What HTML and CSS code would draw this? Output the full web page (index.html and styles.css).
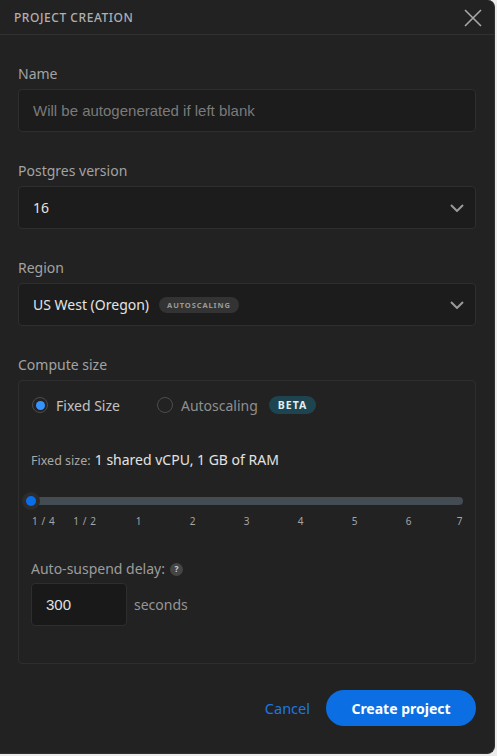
FILE: index.html
```html
<!DOCTYPE html>
<html>
<head>
<meta charset="utf-8">
<link rel="stylesheet" href="styles.css">
</head>
<body>
<div class="dialog">
  <div class="header">
    <span class="title">PROJECT CREATION</span>
    <svg class="close" width="18" height="18" viewBox="0 0 18 18"><path d="M1 1 L17 17 M17 1 L1 17" stroke="#a8a8a8" stroke-width="1.6" fill="none"/></svg>
  </div>
  <div class="body">
    <div class="field">
      <label class="label">Name</label>
      <input class="input text-input" type="text" placeholder="Will be autogenerated if left blank">
    </div>
    <div class="field">
      <label class="label">Postgres version</label>
      <div class="input select">
        <span class="select-value">16</span>
        <svg class="chev" width="14" height="8" viewBox="0 0 14 8"><path d="M1 1 L7 7 L13 1" stroke="#9a9a9a" stroke-width="2" fill="none"/></svg>
      </div>
    </div>
    <div class="field">
      <label class="label">Region</label>
      <div class="input select">
        <span class="select-value">US West (Oregon)</span>
        <span class="tag">AUTOSCALING</span>
        <svg class="chev" width="14" height="8" viewBox="0 0 14 8"><path d="M1 1 L7 7 L13 1" stroke="#9a9a9a" stroke-width="2" fill="none"/></svg>
      </div>
    </div>
    <div class="field">
      <label class="label">Compute size</label>
      <div class="compute">
        <div class="radios">
          <div class="radio-item active"><span class="radio"></span><span class="radio-text">Fixed Size</span></div>
          <div class="radio-item"><span class="radio"></span><span class="radio-text">Autoscaling</span><span class="beta">BETA</span></div>
        </div>
        <div class="fixed-line"><span class="fixed-key">Fixed size:</span> <span class="fixed-val">1 shared vCPU, 1 GB of RAM</span></div>
        <div class="slider">
          <div class="track"></div>
          <div class="thumb"></div>
        </div>
        <div class="ticks">
          <span class="tick first" style="left:0%">1 / 4</span>
          <span class="tick" style="left:12.5%">1 / 2</span>
          <span class="tick" style="left:25%">1</span>
          <span class="tick" style="left:37.5%">2</span>
          <span class="tick" style="left:50%">3</span>
          <span class="tick" style="left:62.5%">4</span>
          <span class="tick" style="left:75%">5</span>
          <span class="tick" style="left:87.5%">6</span>
          <span class="tick last" style="left:100%">7</span>
        </div>
        <div class="suspend-label">Auto-suspend delay: <span class="help">?</span></div>
        <div class="suspend-row">
          <input class="input num-input" type="text" value="300">
          <span class="unit">seconds</span>
        </div>
      </div>
    </div>
    <div class="footer">
      <button class="cancel">Cancel</button>
      <button class="create">Create project</button>
    </div>
  </div>
</div>
</body>
</html>
```
FILE: styles.css
```css
* { box-sizing: border-box; }
html, body { margin: 0; padding: 0; }
body {
  background: #ececec;
  font-family: "Noto Sans", "Open Sans", sans-serif;
  width: 497px;
  height: 756px;
  overflow: hidden;
}
.dialog {
  width: 495px;
  height: 754px;
  background: #222222;
  border: 1px solid #2f2f2f;
  border-top: none;
  border-left: none;
  border-radius: 0 7px 8px 0;
  display: flex;
  flex-direction: column;
}
.header {
  height: 35px;
  border-bottom: 1px solid #313131;
  display: flex;
  align-items: center;
  justify-content: space-between;
  padding: 0 12px 0 14px;
}
.title {
  font-size: 12px;
  letter-spacing: 0.55px;
  color: #b0b0b0;
  font-weight: 500;
}
.close { margin-top: 1px; }
.body {
  padding: 0 18px 0 18px;
  display: flex;
  flex-direction: column;
}
.field { margin-top: 29px; }
.label {
  display: block;
  font-size: 14px;
  line-height: 20px;
  color: #a3a3a3;
  margin-bottom: 5px;
}
.input {
  display: block;
  width: 100%;
  height: 43px;
  background: #1c1c1c;
  border: 1px solid #2e2e2e;
  border-radius: 4px;
  outline: none;
}
.text-input {
  padding: 0 14px;
  font-family: "Liberation Sans", Arial, sans-serif;
  font-size: 15px;
  color: #ddd;
}
.text-input::placeholder { color: #7a7a7a; }
.select {
  display: flex;
  align-items: center;
  padding: 0 11px 0 14px;
}
.select-value {
  font-size: 14px;
  color: #e4e4e4;
}
.select-value:first-child:last-of-type { }
.tag {
  margin-left: 10px;
  height: 16px;
  padding: 0 8px;
  border-radius: 8px;
  background: #333333;
  color: #9a9a9a;
  font-size: 7.5px;
  font-weight: 700;
  letter-spacing: 0.9px;
  display: flex;
  align-items: center;
}
.chev { margin-left: auto; }
.compute {
  border: 1px solid #2e2e2e;
  border-radius: 4px;
  padding: 14px 12px 37px 12px;
  display: flex;
  flex-direction: column;
}
.radios {
  display: flex;
  align-items: center;
  height: 20px;
}
.radio-item {
  display: flex;
  align-items: center;
}
.radio-item + .radio-item { margin-left: 36px; }
.radio {
  width: 16px;
  height: 16px;
  border-radius: 50%;
  border: 1.5px solid #4d4d4d;
  margin-left: 1px;
  display: flex;
  align-items: center;
  justify-content: center;
}
.active .radio::after {
  content: "";
  width: 9px;
  height: 9px;
  border-radius: 50%;
  background: #3394ff;
}
.radio-text {
  margin-left: 8px;
  font-size: 14px;
  color: #8f8f8f;
}
.active .radio-text { color: #c2c2c2; }
.beta {
  margin-left: 11px;
  height: 18px;
  padding: 0 9px;
  border-radius: 9px;
  background: #1e4450;
  color: #e4eef0;
  font-size: 10.5px;
  font-weight: 700;
  letter-spacing: 1px;
  display: flex;
  align-items: center;
}
.fixed-line {
  margin-top: 34px;
  height: 20px;
  line-height: 20px;
  white-space: nowrap;
}
.fixed-key {
  font-size: 12.5px;
  color: #a8a8a8;
}
.fixed-val {
  font-size: 14px;
  color: #e2e2e2;
}
.slider {
  margin-top: 23px;
  height: 18px;
  position: relative;
}
.track {
  position: absolute;
  left: 0;
  right: 0;
  top: 5px;
  height: 8px;
  border-radius: 4px;
  background: #434b53;
}
.thumb {
  position: absolute;
  left: -9px;
  top: 0;
  width: 18px;
  height: 18px;
  border-radius: 50%;
  background: #2c2c2c;
  display: flex;
  align-items: center;
  justify-content: center;
}
.thumb::after {
  content: "";
  width: 10px;
  height: 10px;
  border-radius: 50%;
  background: #0a6ee8;
}
.ticks {
  position: relative;
  margin-top: 4px;
  height: 14px;
}
.tick {
  position: absolute;
  top: 0;
  font-size: 10px;
  line-height: 14px;
  color: #a5a5a5;
  letter-spacing: 0.6px;
  transform: translateX(-50%);
  white-space: nowrap;
}
.tick.first { transform: translateX(1px); }
.tick.last { transform: translateX(-100%); }
.suspend-label {
  margin-top: 31px;
  font-size: 14px;
  line-height: 20px;
  color: #9c9c9c;
  display: flex;
  align-items: center;
}
.help {
  margin-left: 5px;
  width: 13px;
  height: 13px;
  border-radius: 50%;
  background: #454545;
  color: #cfcfcf;
  font-size: 8.5px;
  font-weight: 700;
  display: flex;
  align-items: center;
  justify-content: center;
}
.suspend-row {
  margin-top: 4px;
  display: flex;
  align-items: center;
}
.num-input {
  width: 96px;
  background: #191919;
  padding: 0 14px;
  font-family: "Liberation Sans", Arial, sans-serif;
  font-size: 15px;
  color: #e0e0e0;
}
.unit {
  margin-left: 7px;
  font-size: 14px;
  color: #959595;
}
.footer {
  margin-top: 26px;
  display: flex;
  justify-content: flex-end;
  align-items: center;
  gap: 16px;
}
.cancel {
  background: none;
  border: none;
  padding: 0;
  font-family: "Noto Sans", sans-serif;
  font-size: 14.5px;
  color: #1c78e0;
}
.create {
  height: 36px;
  width: 150px;
  border: none;
  border-radius: 18px;
  background: #0b6fe3;
  color: #ffffff;
  font-family: "Noto Sans", sans-serif;
  font-size: 14px;
  font-weight: 700;
}
```
